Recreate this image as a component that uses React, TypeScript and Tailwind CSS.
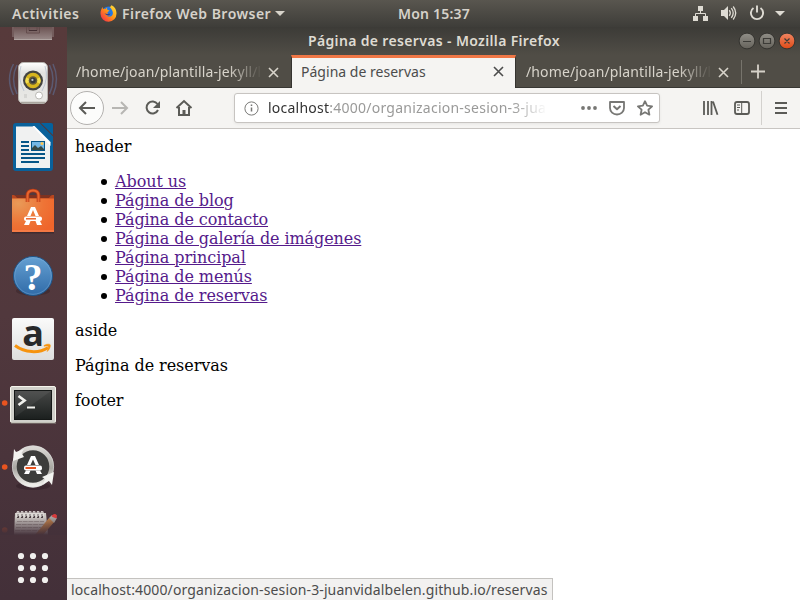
import React from 'react';

const ui = "font-['Noto_Sans','Open_Sans',sans-serif]";

function DockItem({ y, h = 64, label, running = false, children }: { y: number; h?: number; label: string; running?: boolean; children: React.ReactNode }) {
  return (
    <svg aria-label={label} width="67" height={h} viewBox={`0 ${y} 67 ${h}`} className="block shrink-0">
      {running && <circle cx="4.7" cy={y + h / 2 + (h < 64 ? 12 : 1)} r="2.8" fill="#e95420" opacity={h < 64 ? 0.45 : 1} />}
      {children}
    </svg>
  );
}

function Dock() {
  return (
    <aside className="flex w-[67px] shrink-0 flex-col overflow-hidden bg-gradient-to-b from-[#573a3b] via-[#51383d] to-[#433039]">
      <DockItem y={27} h={23} label="Files">
        <defs>
          <linearGradient id="files" x1="0" y1="0" x2="0" y2="1">
            <stop stopColor="#6b5252" /><stop offset="1" stopColor="#9a8b8a" />
          </linearGradient>
        </defs>
        <path d="M12 27h42v10H12z" fill="#745d5d" />
        <path d="M14 27h38v13H14z" fill="url(#files)" />
        <path d="M14 39.5h38" stroke="#b1a5a2" />
        <path d="M26.5 27v6h13v-6M29 27v3.5h8V27" fill="none" stroke="#644d4d" />
        <path d="M29 30.5h8" stroke="#422f32" />
      </DockItem>

      <DockItem y={50} label="Rhythmbox">
        <defs>
          <linearGradient id="speaker" x1="0" y1="0" x2="0" y2="1">
            <stop stopColor="#fff" /><stop offset=".25" stopColor="#e2e2df" /><stop offset="1" stopColor="#e9e9e6" />
          </linearGradient>
        </defs>
        <g fill="none" stroke="#5f7096" strokeWidth="1.5" opacity=".6">
          <path d="M13.5 64q-8 15 0 31M17 65q-7 14 0 29M53 64q7 15 0 31M49.500 65q7 14 0 29" />
        </g>
        <rect x="18.5" y="62.500" width="29" height="41" rx="5" fill="url(#speaker)" stroke="#b7b4af" strokeWidth="1" />
        <path d="M21 102.5h24" stroke="#aaa69f" strokeWidth="1.5" />
        <circle cx="33" cy="80.5" r="10" fill="#444440" />
        <circle cx="33" cy="80.5" r="7.7" fill="#d7b51e" />
        <path d="M33 80.5l-7-3a7.5 7.5 0 0 0 0 6zM33 80.5l7-3a7.5 7.5 0 0 1 0 6z" fill="#f4df52" />
        <circle cx="33" cy="80.5" r="4.3" fill="#665c38" />
        <circle cx="33" cy="80.5" r="2.7" fill="#33373b" />
        <circle cx="32.4" cy="79.9" r="1.1" fill="#bfc7c7" />
        <path d="M21 66q-4 12 3 25M45 66q4 12-3 25" fill="none" stroke="#a5b3c6" opacity=".6" />
        <circle cx="39" cy="95.5" r="3.5" fill="#fff" stroke="#b9b8b3" />
        <path d="M24 94h3v4h-3z" fill="#d6d6d3" />
      </DockItem>

      <DockItem y={114} label="LibreOffice Writer">
        <rect x="13" y="123" width="40" height="48" rx="3" fill="#09619b" />
        <path d="M39 122.500h15v15z" fill="#51383d" />
        <path d="M41 123h10q2 0 2 2v10z" fill="#04629e" />
        <path d="M16 126.5h18l16 16V168H16z" fill="#f0f1f1" />
        <path d="M34.5 126l16 16v4L32.5 126z" fill="#fff" />
        <g stroke="#075687" strokeWidth="2">
          <path d="M21 142h8M21 146h8M21 150h8M21 154h24M21 158h24M21 162h18" />
        </g>
        <rect x="31.5" y="141.5" width="13" height="9" fill="#75b8e5" stroke="#075687" />
        <path d="M32 150v-2l3-3 3 3 3-2 3 3v1z" fill="#384a45" /><circle cx="42" cy="143.5" r="1.5" fill="#ffc550" />
      </DockItem>

      <DockItem y={178} label="Ubuntu Software">
        <defs><radialGradient id="bag" cx=".15" cy=".15" r="1">
          <stop stopColor="#e99a58" /><stop offset=".6" stopColor="#ee7436" /><stop offset="1" stopColor="#ef652b" />
        </radialGradient></defs>
        <path d="M12 232.5h42" stroke="#2f2026" strokeWidth="2" opacity=".55" />
        <path d="M12 199v-4h2l3 2h32l3-2h2v4z" fill="#b8461f" />
        <path d="M15 195h36l-2 3H17z" fill="#7e3220" />
        <path d="M12 198.500h42v33.500H12z" fill="url(#bag)" />
        <path d="M12 231h42" stroke="#fa8b5c" />
        <path d="M27.500 202v-6.500q0-5 5.500-5t5.500 5v6.500" fill="none" stroke="#b73b18" strokeWidth="3.6" />
        <path d="M27.500 202v-6.500q0-5 5.500-5t5.500 5v6.500" fill="none" stroke="#e9672f" strokeWidth="2" />
        <path d="M31 207h4l4 9h-3.500l-2.500-6-2.500 6H27zM26 221h4.500l-1.500 4h-5zM35.500 221h4.500l2 4h-5z" fill="#fff" />
        <rect x="24" y="216.500" width="18" height="4.500" rx="2" fill="#fff" />
        <path d="M26 218.800h10" stroke="#ea5b1f" strokeWidth="1.4" />
      </DockItem>

      <DockItem y={242} label="Help">
        <defs><linearGradient id="help" x1="0" y1="0" x2="0" y2="1">
          <stop stopColor="#65a0d2" /><stop offset="1" stopColor="#306ba8" />
        </linearGradient></defs>
        <ellipse cx="33" cy="291" rx="17" ry="4.5" fill="#25171e" opacity=".3" />
        <circle cx="33" cy="276" r="19.5" fill="url(#help)" stroke="#1e5488" strokeWidth="1" />
        <circle cx="33" cy="276" r="18.3" fill="none" stroke="#82b2db" strokeWidth=".7" opacity=".6" />
        <text x="33" y="289.500" textAnchor="middle" className="fill-white font-['Liberation_Serif',serif] text-[38px] font-bold">?</text>
      </DockItem>

      <DockItem y={306} label="Amazon">
        <defs><linearGradient id="amazon" x1="0" y1="0" x2="0" y2="1">
          <stop stopColor="#fafafa" /><stop offset="1" stopColor="#dedede" />
        </linearGradient></defs>
        <rect x="12" y="318" width="42" height="42" rx="2" fill="url(#amazon)" />
        <text x="33" y="345.500" textAnchor="middle" className="fill-[#28292b] font-['Open_Sans',sans-serif] text-[36px] font-bold">a</text>
        <path d="M15 345.5c10 7.5 24 8 33 2.2" fill="none" stroke="#f6930f" strokeWidth="3" />
        <path d="M44 345.5c3-2 6-1.3 6.2-.7.5 1.5-.6 4.7-3 6.7.8-2.1 1.5-4.3 1-5-.4-.6-2.7-.5-4.2-.3z" fill="#f6930f" stroke="#f6930f" strokeWidth=".6" />
      </DockItem>

      <DockItem y={370} label="Terminal" running>
        <defs><linearGradient id="terminal" x1="0" y1="0" x2="0" y2="1">
          <stop stopColor="#464746" /><stop offset="1" stopColor="#1c201f" />
        </linearGradient></defs>
        <rect x="10.5" y="386.5" width="45" height="36" rx="1.5" fill="#d0d0ca" stroke="#f5f5ec" />
        <path d="M11 423h45" stroke="#929087" />
        <rect x="14" y="390" width="38" height="30" fill="#151817" />
        <rect x="15" y="391" width="36" height="28" fill="url(#terminal)" />
        <path d="M15 391h36L15 417z" fill="#fff" opacity=".06" />
        <path d="M18.5 396l6 4.5-6 4.5" fill="none" stroke="#f1f1ed" strokeWidth="2.7" />
        <path d="M27 407.5h8" stroke="#f1f1ed" strokeWidth="2" />
      </DockItem>

      <DockItem y={434} label="Software Updater" running>
        <defs><linearGradient id="ring" x1="0" y1="0" x2="0" y2="1">
          <stop stopColor="#d9d7d3" /><stop offset=".55" stopColor="#a9a7a2" /><stop offset="1" stopColor="#efeeea" />
        </linearGradient></defs>
        <ellipse cx="33" cy="486" rx="17" ry="4" fill="#24151d" opacity=".35" />
        <circle cx="33" cy="466.5" r="18.6" fill="#3d3d3b" stroke="url(#ring)" strokeWidth="4.6" />
        <circle cx="33" cy="466.5" r="20.6" fill="none" stroke="#ddd" strokeWidth=".6" />
        <path d="M14 449l2 3 8-3-2.500 4 2.500 4-11 4z" fill="#f3f3f0" />
        <path d="M54 472l-12 5 3 2-2 5 6-3 3 4z" fill="#f3f3f0" />
        <path d="M31 456h4l4 9h-3.500l-2.500-5.500-2.500 5.500H27zM26 470.500h4.500L29 474h-5zM35.500 470.500H40l2 3.500h-5z" fill="#fff" />
        <rect x="24" y="465.500" width="18" height="5" rx="2" fill="#fff" /><path d="M25.500 468h10.500" stroke="#e95420" strokeWidth="2" />
      </DockItem>

      <DockItem y={498} h={40} label="Notes" running>
        <defs>
          <linearGradient id="fade" x1="0" y1="0" x2="0" y2="1"><stop stopColor="#44313a" stopOpacity="0" /><stop offset="1" stopColor="#44313a" /></linearGradient>
          <linearGradient id="pencil" x1="0" y1="0" x2="1" y2="1"><stop stopColor="#e1a05b" /><stop offset="1" stopColor="#955832" /></linearGradient>
        </defs>
        <path d="M15 513h31l2 22H14z" fill="#cbc6c2" />
        <g stroke="#928987" strokeDasharray="5 .7">
          <path d="M17 521.500h27M16 524.500h28M16 527.500h25M15 530.500h25" strokeWidth=".8" />
        </g>
        {[18, 22, 26, 30, 34, 38, 42].map(x => <g key={x}><path d={`M${x} 514v4`} stroke="#4c4145" strokeWidth="2" /><path d={`M${x - 1} 517v-4q0-2 2-1v4`} fill="none" stroke="#ece9e5" strokeWidth="1.1" /></g>)}
        <path d="M35 535l14-17 6 3-12 14z" fill="url(#pencil)" />
        <path d="M49 518l3-3 5 3-3 5z" fill="#a9a6a2" />
        <path d="M51.500 516q3-3.500 5.500-.5l-.5 3-4-1.500z" fill="#d83b3c" />
        <rect y="517" width="67" height="18" fill="url(#fade)" />
      </DockItem>

      <svg aria-label="Show Applications" width="67" height="62" viewBox="0 538 67 62" className="block shrink-0">
        {[556, 568, 580].flatMap(y => [21, 33, 45].map(x => <circle key={`${x}-${y}`} cx={x} cy={y} r="3.1" fill="#f1f0ee" />))}
      </svg>
    </aside>
  );
}

function FirefoxLogo() {
  return (
    <svg width="17" height="17" viewBox="0 0 17 17">
      <defs><linearGradient id="fox" x1="1" y1="0" x2="0" y2="1"><stop stopColor="#ffed42" /><stop offset=".45" stopColor="#ff9b15" /><stop offset="1" stopColor="#f51c50" /></linearGradient></defs>
      <circle cx="8.5" cy="8" r="6.6" fill="#2078e6" />
      <path d="M9.5 2C12 1 11 0 11 0c4 1.8 5.500 5 5.500 8.500a8 8 0 0 1-16 .3C.3 6 1.600 3.500 2.600 2L3 4q1.500-.5 2.500.1.4-1.200 1.800-1.700-.8 1.600.3 2.700l2 .5-2.100 1.600q-.3 1.400.7 1.800l2.200-.3q-1 2.700-3.700 1.700 2.200 2.100 4.900.5C14.300 9 12.500 4.600 9.500 2z" fill="url(#fox)" />
      <path d="M4.5 8.500l3 .5 3-.5q-1 3-4 1.600z" fill="#20449d" />
    </svg>
  );
}

function TopBar() {
  return (
    <header className={`grid h-[27px] shrink-0 grid-cols-[300px_268px_1fr] items-center bg-gradient-to-b from-[#59564f] to-[#3e3d39] text-[14px] font-semibold leading-5 text-[#d6d2ca] ${ui}`}>
      <div className="flex items-center pl-3">
        <span className="w-[88px] whitespace-nowrap tracking-[0.5px]">Activities</span>
        <FirefoxLogo />
        <span className="ml-[5px] whitespace-nowrap tracking-[0.46px]">Firefox Web Browser</span>
        <svg className="ml-1" width="10" height="6" viewBox="0 0 10 6"><path d="M0 0h10L5 5z" fill="#d7d3ca" /></svg>
      </div>
      <time className="whitespace-nowrap text-center tracking-[0.22px]">Mon 15:37</time>
      <svg width="232" height="27" viewBox="568 0 232 27" fill="#dedbd3">
        <path d="M698 6h5v5h-5zM693 16h5v5h-5zM703 16h5v5h-5z" />
        <path d="M700.5 11v2.5M695.5 16v-2.5h10V16" fill="none" stroke="#dedbd3" />
        <path d="M721 10h3l4-4v14l-4-4h-3z" />
        <path d="M729.3 10.2q2 2.8 0 5.6M731.3 8.2q3.8 4.8 0 9.6M733.2 6.5q5 6.5 0 13" fill="none" stroke="#dedbd3" strokeWidth="1.3" />
        <path d="M753.5 8a6.1 6.1 0 1 0 7 0M757 5.5v7" fill="none" stroke="#dedbd3" strokeWidth="1.9" />
        <path d="M775 11h10l-5 5z" />
      </svg>
    </header>
  );
}

function TitleBar() {
  return (
    <div className={`grid h-7 shrink-0 grid-cols-[67px_600px_66px] items-center bg-gradient-to-b from-[#3c3b37] to-[#504d46] ${ui}`}>
      <span />
      <h1 className="whitespace-nowrap text-center text-[14px] font-semibold leading-5 tracking-[0.35px] text-[#dfdbd2]">Página de reservas - Mozilla Firefox</h1>
      <svg width="66" height="28" viewBox="734 27 66 28">
        <defs>
          <linearGradient id="gray" x1="0" y1="0" x2="0" y2="1"><stop stopColor="#918f88" /><stop offset="1" stopColor="#65625b" /></linearGradient>
          <linearGradient id="close" x1="0" y1="0" x2="0" y2="1"><stop stopColor="#f08663" /><stop offset="1" stopColor="#df4a16" /></linearGradient>
        </defs>
        <circle cx="747" cy="41" r="7.9" fill="url(#gray)" stroke="#34332f" />
        <circle cx="767" cy="41" r="7.9" fill="url(#gray)" stroke="#34332f" />
        <circle cx="787" cy="41" r="7.9" fill="url(#close)" stroke="#34332f" />
        <path d="M743 41.5h8M763.5 38.5h7v5h-7zM784.5 38.5l5 5M789.5 38.5l-5 5" fill="none" stroke="#3c3b37" strokeWidth="1.2" />
      </svg>
    </div>
  );
}

function Tab({ title, active = false, fade = false }: { title: string; active?: boolean; fade?: boolean }) {
  return (
    <div className={`flex shrink-0 items-center ${active ? 'h-[33px] w-[225px] border-x border-t-[3px] border-x-[#35332f] border-t-[#f07746] bg-[#f5f4f2] pb-[3px] pl-[9px] text-[#4c4c4c]' : 'h-8 w-[225px] pl-[9px] pt-0.5 text-[#d8d4cb]'}`}>
      <span className={`w-[184px] whitespace-nowrap ${fade ? '[mask-image:linear-gradient(to_right,black_152px,transparent_186px)] tracking-[0.13px]' : 'tracking-[0.02px]'}`}>{title}</span>
      <svg className="ml-2" width="11" height="11" viewBox="0 0 11 11"><path d="M1 1l9 9M10 1l-9 9" fill="none" stroke="currentColor" strokeWidth="1.6" /></svg>
    </div>
  );
}

function TabBar() {
  return (
    <nav className={`relative flex h-[33px] shrink-0 bg-[#504d46] text-[14px] leading-5 shadow-[inset_0_-1px_#383733] ${ui}`}>
      <div className="w-[224px] shrink-0"><Tab title="/home/joan/plantilla-jekyll/h" fade /></div>
      <Tab title="Página de reservas" active />
      <div className="ml-px"><Tab title="/home/joan/plantilla-jekyll/h" fade /></div>
      <svg width="59" height="32" viewBox="741 55 59 32" className="-ml-px"><path d="M741.5 60v24" stroke="#77746c" /><path d="M751 71.5h14M758 64.5v14" stroke="#d5d1c8" strokeWidth="1.8" /></svg>
    </nav>
  );
}

function Toolbar() {
  return (
    <div className={`flex h-[41px] shrink-0 items-center border-b border-[#c8c5c2] bg-[#f5f4f2] ${ui}`}>
      <svg width="167" height="40" viewBox="67 88 167 40" fill="none" stroke="#5b5b57" strokeWidth="2">
        <circle cx="87" cy="108" r="16.5" fill="#fcfcfb" stroke="#b3b1af" strokeWidth="1" />
        <path d="M95 108H80M86 102l-6 6 6 6" />
        <path d="M112 108h15M121 102l6 6-6 6" stroke="#b7b6b3" />
        <path d="M157.5 104a6 6 0 1 0 .5 6" /><path d="M160 101v7h-7z" fill="#5b5b57" stroke="none" />
        <path d="M176.5 108l7.5-7 7.5 7M179 107v8h10v-8" />
        <path d="M182.500 110h3v5h-3z" fill="#5b5b57" stroke="none" />
      </svg>
      <div className="flex h-[30px] w-[426px] items-center rounded-[3px] border border-[#c7c4c1] bg-white pl-[9px] text-[14px] leading-5 shadow-[0_1px_3px_#00000010]">
        <svg width="15" height="15" viewBox="0 0 15 15"><circle cx="7.5" cy="7.5" r="6.6" fill="none" stroke="#7a7a78" /><path d="M7.5 6.5v4M7.5 3.5v1.5" stroke="#747472" strokeWidth="1.5" /></svg>
        <span className="ml-[9px] w-[279px] whitespace-nowrap tracking-[0.24px] text-[#9a9a99] [mask-image:linear-gradient(to_right,black_244px,transparent_279px)]"><span className="text-[#333]">localhost</span>:4000/organizacion-sesion-3-juan</span>
        <svg width="110" height="28" viewBox="547 94 110 28" fill="none" stroke="#777774" strokeWidth="1.8" strokeLinejoin="round">
          <g fill="#777774" stroke="none"><circle cx="583" cy="108" r="1.9" /><circle cx="589" cy="108" r="1.9" /><circle cx="595" cy="108" r="1.9" /></g>
          <path d="M610 102h14v6a7 6.5 0 0 1-14 0z" /><path d="M613.5 106l3.5 3.2 3.5-3.2" strokeWidth="2" />
          <path d="M645 101.2l2.1 4.5 5 .6-3.7 3.4 1 5-4.4-2.5-4.4 2.5 1-5-3.7-3.4 5-.6z" />
        </svg>
      </div>
      <svg width="140" height="40" viewBox="660 88 140 40" fill="none" stroke="#5b5b57" strokeWidth="1.8">
        <path d="M704 101v14M708 101v14M711.5 101v14M713 101.5l4.5 13.2" />
        <rect x="735" y="102" width="14" height="12" rx="2" />
        <path d="M741.7 102v12M737 105h3M737 107.5h3M737 110h2" strokeWidth="1" />
        <path d="M761.5 91v34" stroke="#d3d1ce" strokeWidth="1" />
        <path d="M775 103h12M775 108h12M775 113h12" strokeWidth="2" />
      </svg>
    </div>
  );
}

const links = ['About us', 'Página de blog', 'Página de contacto', 'Página de galería de imágenes', 'Página principal', 'Página de menús', 'Página de reservas'];

function PageContent() {
  return (
    <main className="relative flex-1 bg-white px-2 pt-2 font-['DejaVu_Serif',serif] text-[16px] leading-[19px] tracking-[-0.06px] text-black">
      <p>header</p>
      <ul className="my-4 pl-[26px]">
        {links.map(link => (
          <li key={link} className="flex items-center gap-2">
            <span className="mt-px size-1.5 rounded-full bg-black" />
            <a href="#" className="tracking-[-0.085px] text-[#551a8b] underline">{link}</a>
          </li>
        ))}
      </ul>
      <p className="mb-4">aside</p>
      <p className="mb-4">Página de reservas</p>
      <p>footer</p>
      <div className={`absolute bottom-0 left-0 h-[22px] w-[486px] whitespace-nowrap border-r border-t border-[#c4c2bf] bg-[#f2f1f0] pl-1 text-[14px] leading-[22px] text-[#4c4c4c] tracking-[0.12px] ${ui}`}>localhost:4000/organizacion-sesion-3-juanvidalbelen.github.io/reservas</div>
    </main>
  );
}

export default function App() {
  return (
    <div className="flex h-[600px] w-[800px] flex-col overflow-hidden">
      <TopBar />
      <div className="flex min-h-0 flex-1">
        <Dock />
        <section className="flex min-w-0 flex-1 flex-col">
          <TitleBar />
          <TabBar />
          <Toolbar />
          <PageContent />
        </section>
      </div>
    </div>
  );
}
